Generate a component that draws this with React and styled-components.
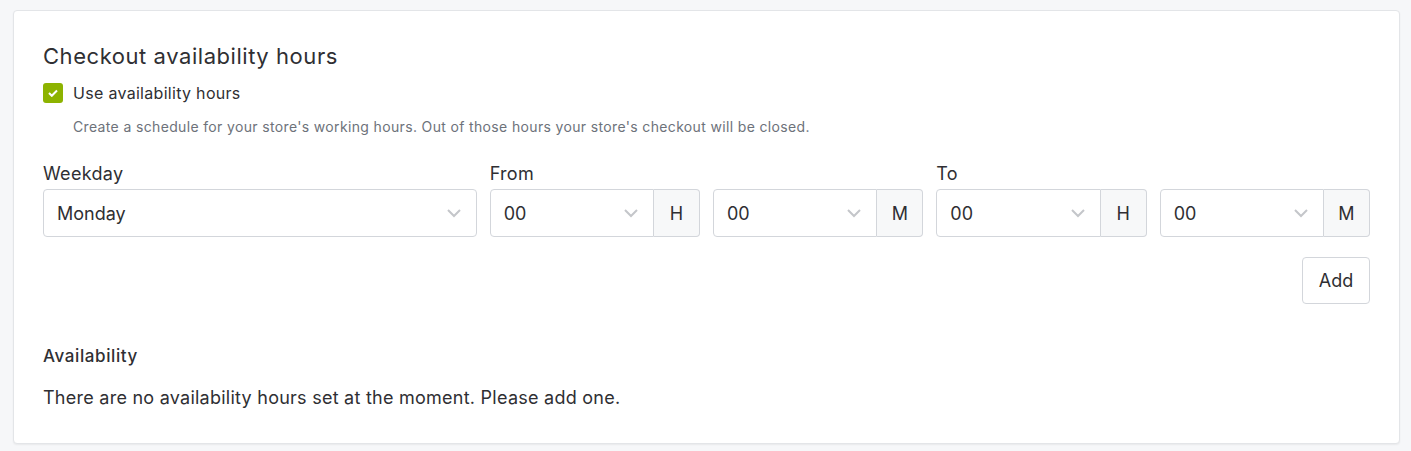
import React from "react";
import styled, { createGlobalStyle } from "styled-components";

const GlobalStyle = createGlobalStyle`
  body {
    margin: 0;
    background: #f6f7f9;
    font-family: "Inter", "Liberation Sans", sans-serif;
    color: #2f2f33;
  }
`;

const Page = styled.div`
  padding: 10px 11px 9px 13px;
`;

const Card = styled.section`
  background: #fff;
  border: 1px solid #e3e5e8;
  border-radius: 4px;
  box-shadow: 0 1px 2px rgba(0, 0, 0, 0.06);
  padding: 31px 29px 34px 29px;
`;

const Title = styled.h2`
  margin: 0;
  font-size: 22px;
  font-weight: 400;
  line-height: 28px;
  letter-spacing: 0.55px;
`;

const CheckRow = styled.label`
  display: flex;
  align-items: center;
  gap: 10px;
  margin-top: 13px;
  font-size: 16px;
  line-height: 20px;
  letter-spacing: 0.3px;
`;

const Box = styled.span`
  width: 20px;
  height: 20px;
  border-radius: 3px;
  background: #8db300;
  display: flex;
  align-items: center;
  justify-content: center;
`;

const Help = styled.p`
  margin: 15px 0 0 30px;
  font-size: 14px;
  line-height: 18px;
  color: #6d727a;
  letter-spacing: 0.35px;
`;

const Grid = styled.div`
  display: grid;
  grid-template-columns: 1fr 1fr 1fr;
  gap: 13px;
  margin-top: 27px;
`;

const Field = styled.div`
  display: flex;
  flex-direction: column;
  gap: 4px;
`;

const Label = styled.span`
  font-size: 18px;
  line-height: 22px;
  letter-spacing: 0.3px;
`;

const Pair = styled.div`
  display: flex;
  gap: 13px;
`;

const Group = styled.div`
  flex: 1;
  display: flex;
`;

const Select = styled.div`
  flex: 1;
  height: 48px;
  box-sizing: border-box;
  border: 1px solid #d3d6db;
  border-radius: ${(p) => (p.$addon ? "4px 0 0 4px" : "4px")};
  display: flex;
  align-items: center;
  justify-content: space-between;
  padding: 0 14px 0 13px;
  font-size: 18px;
`;

const Addon = styled.div`
  width: 46px;
  height: 48px;
  box-sizing: border-box;
  border: 1px solid #d3d6db;
  border-left: none;
  border-radius: 0 4px 4px 0;
  background: #f7f8f9;
  display: flex;
  align-items: center;
  justify-content: center;
  font-size: 18px;
`;

const Actions = styled.div`
  display: flex;
  justify-content: flex-end;
  margin-top: 20px;
`;

const Button = styled.button`
  height: 47px;
  width: 68px;
  border: 1px solid #d3d6db;
  border-radius: 4px;
  background: #fff;
  font-family: inherit;
  font-size: 18px;
  color: inherit;
`;

const SubTitle = styled.h3`
  margin: 41px 0 0;
  font-size: 17px;
  font-weight: 500;
  line-height: 22px;
  letter-spacing: 0.6px;
`;

const Empty = styled.p`
  margin: 20px 0 0;
  font-size: 18px;
  line-height: 22px;
  letter-spacing: 0.25px;
`;

const Chevron = () => (
  <svg width="16" height="10" viewBox="0 0 16 10" fill="none">
    <path d="M2 2l6 6 6-6" stroke="#c4c6ca" strokeWidth="2" />
  </svg>
);

const Check = () => (
  <svg width="10" height="8" viewBox="0 0 10 8" fill="none">
    <path d="M1 4l2.8 2.8L9 1.5" stroke="#fff" strokeWidth="2" />
  </svg>
);

function TimeGroup({ unit }) {
  return (
    <Group>
      <Select $addon>
        00
        <Chevron />
      </Select>
      <Addon>{unit}</Addon>
    </Group>
  );
}

export default function App() {
  return (
    <Page>
      <GlobalStyle />
      <Card>
        <Title>Checkout availability hours</Title>
        <CheckRow>
          <Box>
            <Check />
          </Box>
          Use availability hours
        </CheckRow>
        <Help>
          Create a schedule for your store's working hours. Out of those hours
          your store's checkout will be closed.
        </Help>
        <Grid>
          <Field>
            <Label>Weekday</Label>
            <Select>
              Monday
              <Chevron />
            </Select>
          </Field>
          <Field>
            <Label>From</Label>
            <Pair>
              <TimeGroup unit="H" />
              <TimeGroup unit="M" />
            </Pair>
          </Field>
          <Field>
            <Label>To</Label>
            <Pair>
              <TimeGroup unit="H" />
              <TimeGroup unit="M" />
            </Pair>
          </Field>
        </Grid>
        <Actions>
          <Button>Add</Button>
        </Actions>
        <SubTitle>Availability</SubTitle>
        <Empty>
          There are no availability hours set at the moment. Please add one.
        </Empty>
      </Card>
    </Page>
  );
}
